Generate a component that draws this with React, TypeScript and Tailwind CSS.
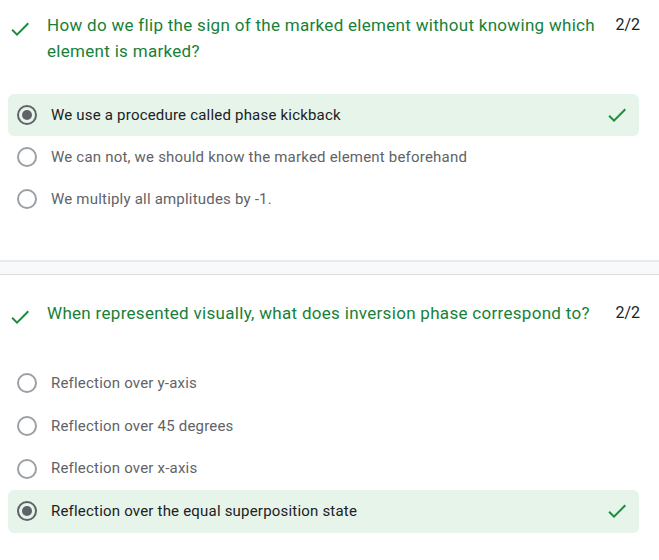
import React from "react";

interface Option {
  label: string;
  chosen?: boolean;
}

interface Question {
  title: string;
  score: string;
  options: Option[];
}

const questions: Question[] = [
  {
    title: "How do we flip the sign of the marked element without knowing which element is marked?",
    score: "2/2",
    options: [
      { label: "We use a procedure called phase kickback", chosen: true },
      { label: "We can not, we should know the marked element beforehand" },
      { label: "We multiply all amplitudes by -1." },
    ],
  },
  {
    title: "When represented visually, what does inversion phase correspond to?",
    score: "2/2",
    options: [
      { label: "Reflection over y-axis" },
      { label: "Reflection over 45 degrees" },
      { label: "Reflection over x-axis" },
      { label: "Reflection over the equal superposition state", chosen: true },
    ],
  },
];

function CheckIcon({ className }: { className?: string }) {
  return (
    <svg viewBox="0 0 24 24" className={className} fill="currentColor">
      <path d="M9 16.17L4.83 12l-1.42 1.41L9 19 21 7l-1.41-1.41z" />
    </svg>
  );
}

function Radio({ on }: { on?: boolean }) {
  return (
    <span
      className={
        on
          ? "flex h-5 w-5 shrink-0 items-center justify-center rounded-full border-2 border-[#5f6368]"
          : "flex h-5 w-5 shrink-0 items-center justify-center rounded-full border-2 border-[#9aa0a6]"
      }
    >
      {on ? <span className="h-[10px] w-[10px] rounded-full bg-[#5f6368]" /> : null}
    </span>
  );
}

function OptionRow({ option, rowH }: { option: Option; rowH: string }) {
  return (
    <div
      className={
        option.chosen
          ? `flex ${rowH} items-center rounded-md bg-[#e6f4ea] pl-[9px] pr-[10px]`
          : `flex ${rowH} items-center pl-[9px] pr-[10px]`
      }
    >
      <Radio on={option.chosen} />
      <span
        className={
          option.chosen
            ? "ml-[14px] flex-1 text-[15px] tracking-[0.2px] text-[#202124]"
            : "ml-[14px] flex-1 text-[15px] tracking-[0.2px] text-[#5f6368]"
        }
      >
        {option.label}
      </span>
      {option.chosen ? <CheckIcon className="h-6 w-6 text-[#1e8e3e]" /> : null}
    </div>
  );
}

function QuestionBlock({
  q,
  top,
  gap,
  rowH,
}: {
  q: Question;
  top: string;
  gap: string;
  rowH: string;
}) {
  return (
    <div className={`px-2 ${top}`}>
      <div className="flex items-start">
        <CheckIcon className="mt-[5px] h-6 w-6 shrink-0 text-[#1e8e3e]" />
        <div className="ml-[15px] flex-1 text-[17px] leading-[26px] tracking-[0.3px] text-[#188038]">
          {q.title}
        </div>
        <div className="ml-5 mr-[11px] text-[16px] leading-[26px] text-[#202124]">{q.score}</div>
      </div>
      <div className={`flex flex-col pr-[12px] ${gap}`}>
        {q.options.map((o) => (
          <OptionRow key={o.label} option={o} rowH={rowH} />
        ))}
      </div>
    </div>
  );
}

export default function App() {
  return (
    <div className="h-[560px] w-[659px] overflow-hidden bg-white font-['Roboto',sans-serif]">
      <div className="h-[260px]">
        <QuestionBlock q={questions[0]} top="pt-[12px]" gap="mt-[30px]" rowH="h-[42px]" />
      </div>
      <div className="h-[15px] border-t-2 border-b border-t-[#e8eaed] border-b-[#dadce0] bg-[#f8f9fa]" />
      <QuestionBlock q={questions[1]} top="pt-[25px]" gap="mt-[33px]" rowH="h-[42.67px]" />
    </div>
  );
}
